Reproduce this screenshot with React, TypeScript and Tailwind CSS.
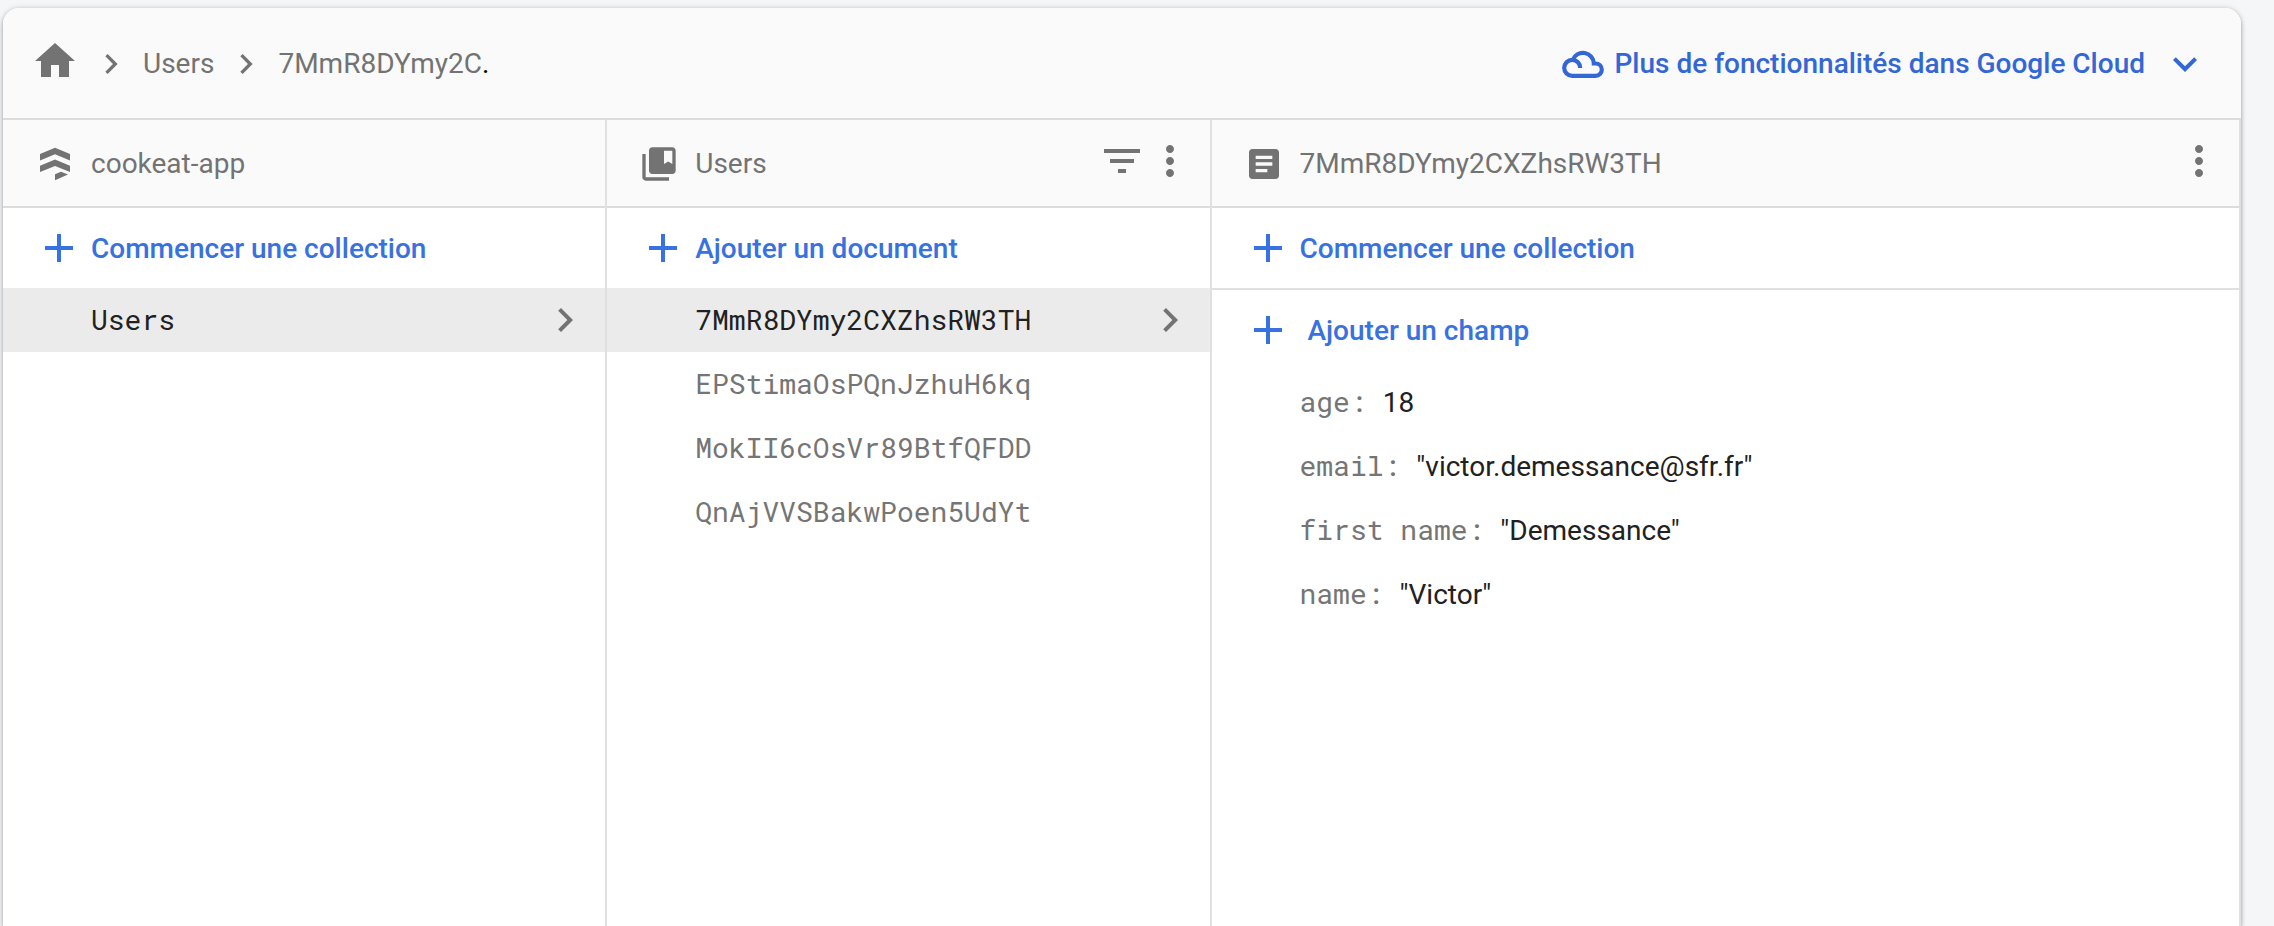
import React from "react";

type IconProps = { d: string; className?: string };

function Icon({ d, className = "size-12" }: IconProps) {
  return (
    <svg viewBox="0 0 24 24" className={`${className} shrink-0 fill-current`} aria-hidden="true">
      <path d={d} />
    </svg>
  );
}

const paths = {
  home: "M10 20v-6h4v6h5v-8h3L12 3 2 12h3v8z",
  right: "M10 6 8.59 7.41 13.17 12l-4.58 4.59L10 18l6-6z",
  down: "M7.41 8.59 12 13.17l4.59-4.58L18 10l-6 6-6-6z",
  add: "M19 13h-6v6h-2v-6H5v-2h6V5h2v6h6z",
  more: "M12 8c1.1 0 2-.9 2-2s-.9-2-2-2-2 .9-2 2 .9 2 2 2zm0 2c-1.1 0-2 .9-2 2s.9 2 2 2 2-.9 2-2-.9-2-2-2zm0 6c-1.1 0-2 .9-2 2s.9 2 2 2 2-.9 2-2-.9-2-2-2z",
  filter: "M10 18h4v-2h-4v2zM3 6v2h18V6H3zm3 7h12v-2H6v2z",
  collection:
    "M4 6H2v14c0 1.1.9 2 2 2h14v-2H4zM20 2H8c-1.1 0-2 .9-2 2v12c0 1.1.9 2 2 2h12c1.1 0 2-.9 2-2V4c0-1.1-.9-2-2-2zm0 10-2.5-1.5L15 12V4h5z",
  article:
    "M19 3H5c-1.1 0-2 .9-2 2v14c0 1.1.9 2 2 2h14c1.1 0 2-.9 2-2V5c0-1.1-.9-2-2-2zm-5 14H7v-2h7v2zm3-4H7v-2h10v2zm0-4H7V7h10v2z",
};

function FirestoreIcon() {
  return (
    <svg viewBox="0 0 40 40" className="size-10 shrink-0 fill-current" aria-hidden="true">
      <path d="M5 10 20 3.700 35 10V16.500L20 10.300 5 16.500zM5 21.700 20 15.500 35 21.700V28.100L20 21.900 5 28.100zM20 30.300 26 27.700 33 30.500 20 36.300z" />
    </svg>
  );
}

function CloudIcon() {
  return (
    <svg viewBox="0 0 42 28" className="h-7 w-[42px] shrink-0" fill="none" stroke="currentColor" strokeWidth="4.2" aria-hidden="true">
      <path d="M18.200 18A8 8 0 1 0 10.200 25.900H33.600A6.200 6.200 0 0 0 33.600 13.500H31.800A10.900 10.900 0 0 0 10.700 9.900" />
    </svg>
  );
}

function AddButton({ children, gap = "gap-2" }: { children: string; gap?: string }) {
  return (
    <button className={`flex h-20 w-full items-center pl-8 font-medium text-[#3871e0] ${gap}`}>
      <Icon d={paths.add} />
      <span className="pt-0.5">{children}</span>
    </button>
  );
}

function PanelHeader({ icon, title, children }: { icon: React.ReactNode; title: string; children?: React.ReactNode }) {
  return (
    <header className="flex h-22 items-center border-b-2 border-[#dcdcdc] bg-[#fafafa] pt-0.5 pr-4 pl-8 text-[#737373]">
      {icon}
      <h2 className="ml-4 grow truncate">{title}</h2>
      <div className="flex pb-1.5">{children}</div>
    </header>
  );
}

function IconButton({ label, d }: { label: string; d: string }) {
  return (
    <button aria-label={label}>
      <Icon d={d} />
    </button>
  );
}

function Item({ name, selected }: { name: string; selected?: boolean }) {
  return (
    <li>
      <a
        href="#"
        className={`flex h-16 items-center justify-between pr-4 pl-22 font-['Roboto_Mono','Liberation_Mono',monospace] ${
          selected ? "bg-[#ebebeb] text-[#212121]" : "text-[#757575]"
        }`}
      >
        {name}
        {selected && (
          <span className="text-[#737373]">
            <Icon d={paths.right} />
          </span>
        )}
      </a>
    </li>
  );
}

const documents = ["7MmR8DYmy2CXZhsRW3TH", "EPStimaOsPQnJzhuH6kq", "MokII6cOsVr89BtfQFDD", "QnAjVVSBakwPoen5UdYt"];

const fields = [
  ["age", "18"],
  ["email", '"victor.demessance@sfr.fr"'],
  ["first name", '"Demessance"'],
  ["name", '"Victor"'],
];

export default function App() {
  return (
    <div className="flex min-h-screen flex-col overflow-hidden bg-[#f5f6f8] pt-2 pr-[33px] pl-[3px] font-['Roboto',sans-serif] text-[28px] leading-10">
      <main className="flex grow flex-col overflow-hidden rounded-t-2xl bg-white shadow-[0_2px_4px_rgba(0,0,0,0.3),0_0_6px_rgba(0,0,0,0.12)]">
        <div className="flex h-28 items-center justify-between border-b-2 border-[#dcdcdc] bg-[#fafafa] pt-0.5 pr-8 pl-7">
          <nav className="flex items-center gap-3 text-[#737373]">
            <a href="#" aria-label="Accueil" className="pb-1.5">
              <Icon d={paths.home} />
            </a>
            <Icon d={paths.right} className="size-10" />
            <a href="#">Users</a>
            <Icon d={paths.right} className="size-10" />
            <a href="#">
              7MmR8DYmy2C<span className="text-black">.</span>
            </a>
          </nav>
          <button className="flex items-center font-medium text-[#3367d6]">
            <CloudIcon />
            <span className="mr-4 ml-2.5">Plus de fonctionnalités dans Google Cloud</span>
            <Icon d={paths.down} />
          </button>
        </div>
        <div className="grid grow grid-cols-[27fr_27fr_46fr]">
          <section className="border-r-2 border-[#e0e0e0]">
            <PanelHeader icon={<FirestoreIcon />} title="cookeat-app" />
            <AddButton>Commencer une collection</AddButton>
            <ul>
              <Item name="Users" selected />
            </ul>
          </section>
          <section className="border-r-2 border-[#e0e0e0]">
            <PanelHeader icon={<Icon d={paths.collection} className="size-10" />} title="Users">
              <IconButton label="Filtrer" d={paths.filter} />
              <IconButton label="Options de la collection" d={paths.more} />
            </PanelHeader>
            <AddButton>Ajouter un document</AddButton>
            <ul>
              {documents.map((id, i) => (
                <Item key={id} name={id} selected={i === 0} />
              ))}
            </ul>
          </section>
          <section className="border-r-2 border-[#e0e0e0]">
            <PanelHeader icon={<Icon d={paths.article} className="size-10" />} title="7MmR8DYmy2CXZhsRW3TH">
              <IconButton label="Options du document" d={paths.more} />
            </PanelHeader>
            <AddButton>Commencer une collection</AddButton>
            <div className="border-t-2 border-[#e0e0e0]">
              <AddButton gap="gap-4">Ajouter un champ</AddButton>
              <dl>
                {fields.map(([name, value]) => (
                  <div key={name} className="flex h-16 items-baseline gap-4 pl-22 leading-16">
                    <dt className="font-['Roboto_Mono','Liberation_Mono',monospace] text-[#757575]">{name}:</dt>
                    <dd className="text-[#212121]">{value}</dd>
                  </div>
                ))}
              </dl>
            </div>
          </section>
        </div>
      </main>
    </div>
  );
}
